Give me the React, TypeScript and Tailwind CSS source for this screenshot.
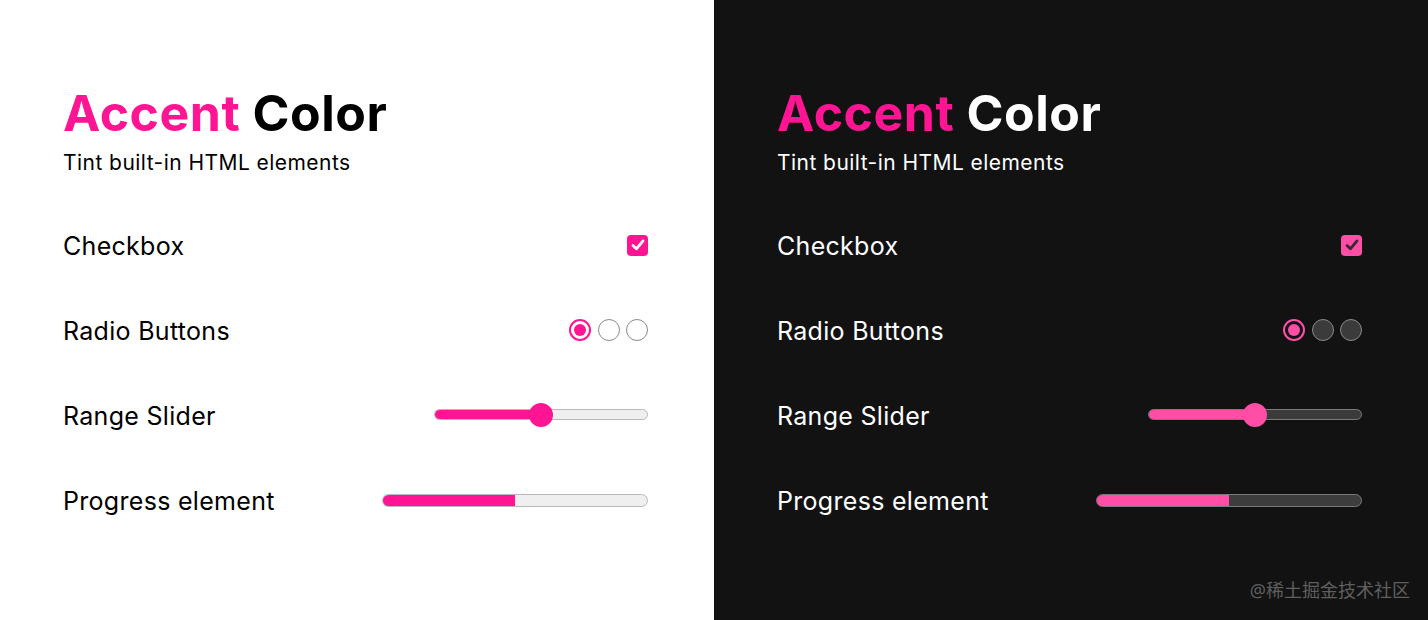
import React from "react";

type Theme = "light" | "dark";

function Check({ color }: { color: string }) {
  return (
    <svg width="16" height="16" viewBox="0 0 16 16" fill="none">
      <path d="M3 8.6 L6.4 11.8 L13 3.9" stroke={color} strokeWidth="2.8" strokeLinecap="round" strokeLinejoin="round" />
    </svg>
  );
}

function Panel({ theme }: { theme: Theme }) {
  const dark = theme === "dark";
  const pink = dark ? "bg-[#ff4ea6]" : "bg-[#ff1493]";
  return (
    <div
      className={`relative flex-1 h-[620px] ${dark ? "bg-[#121212] text-white" : "bg-white text-black"}`}
      style={{ fontFamily: "Inter, 'Noto Sans', sans-serif" }}
    >
      <div className="pl-[63px] pr-[66px] pt-[88px]">
        <h1 className="text-[50px] leading-[50px] font-bold tracking-[0.5px]">
          <span className="text-[#ff1493]">Accent</span> Color
        </h1>
        <p className="mt-[11px] text-[21px] leading-[28px] tracking-[0.45px]">Tint built-in HTML elements</p>
        <div className="mt-[26px] flex flex-col">
          <div className="h-[85px] flex items-center justify-between">
            <span className="text-[25px] leading-[32px] tracking-[0.3px]">Checkbox</span>
            <div className={`w-[21px] h-[21px] rounded-[4px] ${pink} flex items-center justify-center -mt-[1px]`}>
              <Check color={dark ? "#3b2533" : "#ffffff"} />
            </div>
          </div>
          <div className="h-[85px] flex items-center justify-between">
            <span className="text-[25px] leading-[32px] tracking-[0.3px]">Radio Buttons</span>
            <div className="flex items-center gap-[6.5px] -mt-[2px]">
              <div className={`w-[22px] h-[22px] rounded-full border-2 ${dark ? "border-[#ff4ea6] bg-[#121212]" : "border-[#ff1493] bg-white"} flex items-center justify-center`}>
                <div className={`w-[12px] h-[12px] rounded-full ${pink}`} />
              </div>
              <div className={`w-[22px] h-[22px] rounded-full border-[1.5px] ${dark ? "border-[#8a8a8a] bg-[#3b3b3b]" : "border-[#8a8a8a] bg-white"}`} />
              <div className={`w-[22px] h-[22px] rounded-full border-[1.5px] ${dark ? "border-[#8a8a8a] bg-[#3b3b3b]" : "border-[#8a8a8a] bg-white"}`} />
            </div>
          </div>
          <div className="h-[85px] flex items-center justify-between">
            <span className="text-[25px] leading-[32px] tracking-[0.3px]">Range Slider</span>
            <div className="relative w-[214px] h-[24px] flex items-center -mt-[2px]">
              <div className={`w-full h-[11px] rounded-full border ${dark ? "border-[#7a7a7a] bg-[#3b3b3b]" : "border-[#b8b8b8] bg-[#efefef]"} overflow-hidden`}>
                <div className={`h-full w-1/2 ${pink}`} />
              </div>
              <div className={`absolute left-[95px] top-0 w-[24px] h-[24px] rounded-full ${pink}`} />
            </div>
          </div>
          <div className="h-[85px] flex items-center justify-between">
            <span className="text-[25px] leading-[32px] tracking-[0.3px]">Progress element</span>
            <div className={`w-[266px] h-[13px] rounded-full border ${dark ? "border-[#7a7a7a] bg-[#3d3d3d]" : "border-[#b8b8b8] bg-[#efefef]"} overflow-hidden -mt-[1px]`}>
              <div className={`h-full w-1/2 ${pink}`} />
            </div>
          </div>
        </div>
      </div>
      {dark && (
        <div
          className="absolute right-[18px] top-[576px] text-[18px] leading-[28px] text-[#5f5f5f]"
          style={{ fontFamily: "'Noto Sans', 'Noto Sans CJK SC', sans-serif" }}
        >
          @稀土掘金技术社区
        </div>
      )}
    </div>
  );
}

export default function App() {
  return (
    <div className="flex w-[1428px] h-[620px] overflow-hidden">
      <Panel theme="light" />
      <Panel theme="dark" />
    </div>
  );
}
